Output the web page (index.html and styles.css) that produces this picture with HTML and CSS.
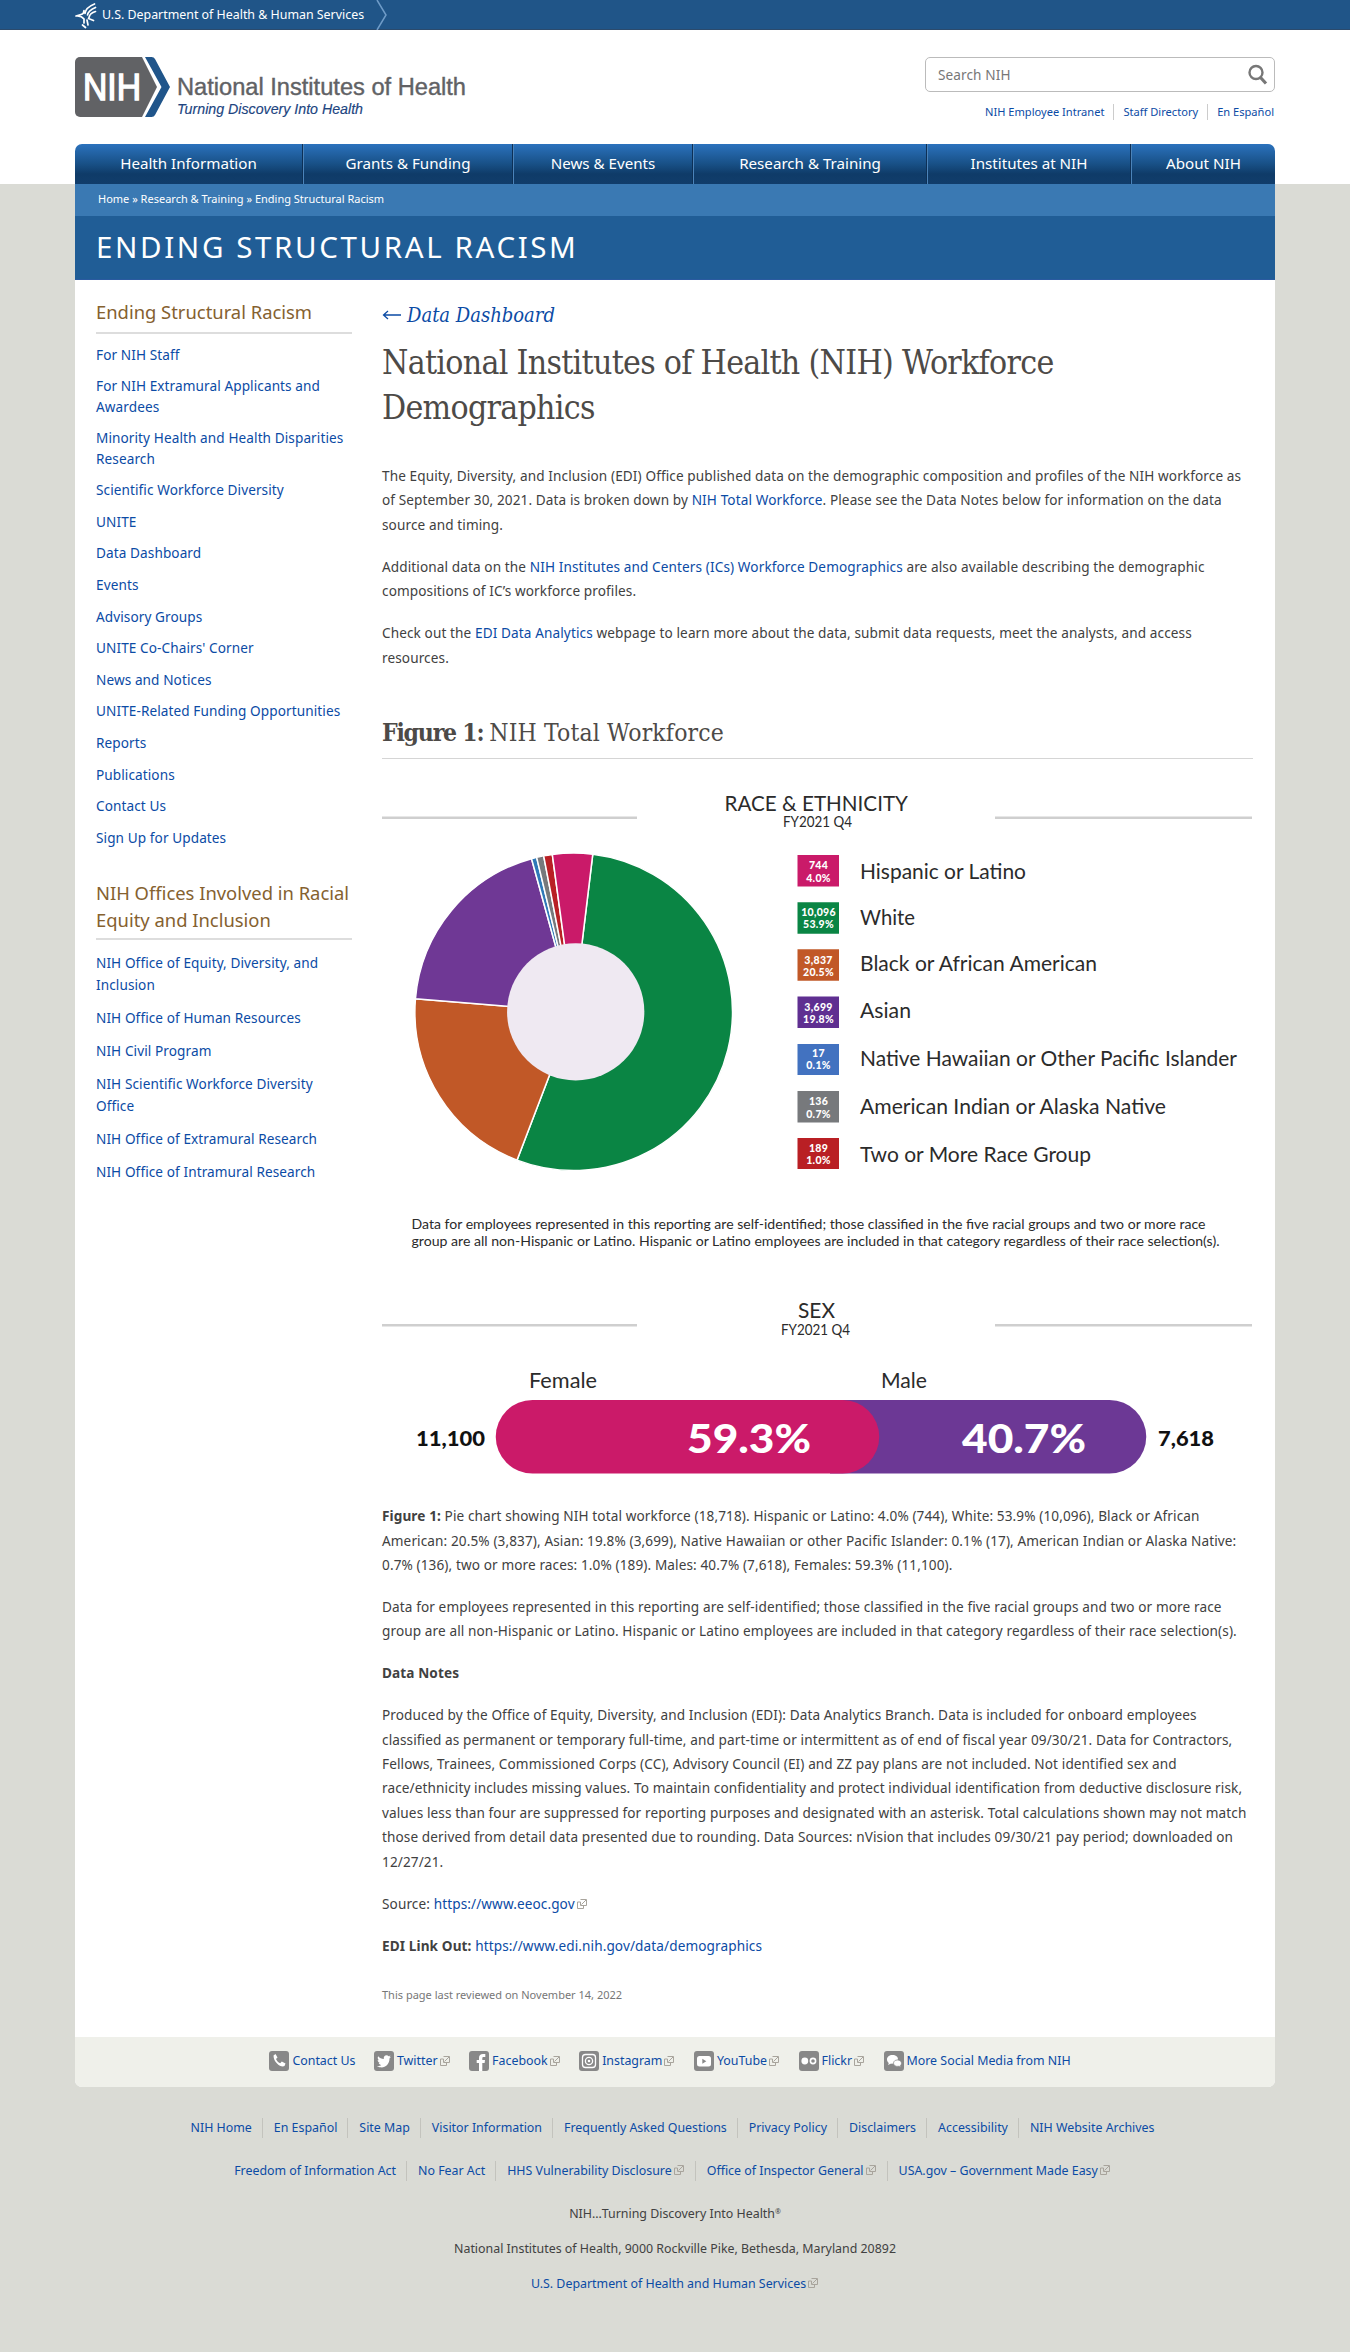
FILE: index.html
```html
<!DOCTYPE html>
<html lang="en">
<head>
<meta charset="utf-8">
<title>NIH Workforce Demographics</title>
<link rel="stylesheet" href="styles.css">
</head>
<body>
<svg class="defs" width="0" height="0" aria-hidden="true">
  <symbol id="ext" viewBox="0 0 12 12"><path d="M4.5 1.5h6v6h-2.500M10 2L5.500 6.500M4.500 4h-3v6.500h6V8M4.500 4v3.500h3.500" fill="none" stroke="currentColor"/></symbol>
</svg>
<div class="topbar"><div class="wrap topbar-in">
  <svg class="hhs" width="24" height="28" viewBox="0 0 24 28" fill="none" stroke="#fff" stroke-width="1.700" stroke-linecap="round"><path d="M19.500 3c-5 2-9 5-9.500 9.500M20.500 6.500c-4.500 2-7.500 4-8 7.500M20.500 10.500c-3.500 1-6 3-6.500 6M1 15l5-1.500c2-.5 3-2 3-4M2.500 15c4 0 5 1 6.500 3M13.500 17.500l5 2M9 18v4M7.500 24l3 2.500M12 19l1 5"/></svg>
  <span class="hhs-name">U.S. Department of Health &amp; Human Services</span>
  <svg width="12" height="30" viewBox="0 0 12 30"><path d="M1 0l9 15-9 15" fill="none" stroke="#6f9cc8" stroke-width="1.500"/></svg>
</div></div>
<header class="header"><div class="wrap header-in">
  <svg class="logo" width="400" height="62" viewBox="75 56 400 62">
    <path d="M80 57h62l15 30-15 30H80a5 5 0 0 1-5-5V62a5 5 0 0 1 5-5z" fill="#616265"/>
    <path d="M145 57h6.500q2.500 0 3.500 2l15 28-15 28q-1 2-3.500 2H145l16.500-30z" fill="#20558a"/>
    <text x="83" y="100" font-size="37" fill="#fff" stroke="#fff" stroke-width="1.400" textLength="58" lengthAdjust="spacingAndGlyphs">NIH</text>
    <text x="177" y="95" font-size="23" fill="#616265" stroke="#616265" stroke-width=".4" textLength="289" lengthAdjust="spacingAndGlyphs">National Institutes of Health</text>
    <text x="177" y="113.500" font-size="14" font-style="italic" fill="#20447f" stroke="#20447f" stroke-width=".15" textLength="186" lengthAdjust="spacingAndGlyphs">Turning Discovery Into Health</text>
  </svg>
  <div class="tools">
    <div class="search"><span>Search NIH</span>
      <svg width="20" height="21" viewBox="0 0 20 21" fill="none" stroke="#777"><circle cx="8" cy="8.500" r="6.500" stroke-width="2.400"/><path d="M12.500 13.500l5.500 6" stroke-width="3.200"/></svg>
    </div>
    <div class="quick"><a>NIH Employee Intranet</a><a>Staff Directory</a><a>En Español</a></div>
  </div>
</div>
<nav class="wrap nav"><a>Health Information</a><a>Grants &amp; Funding</a><a>News &amp; Events</a><a>Research &amp; Training</a><a>Institutes at NIH</a><a>About NIH</a></nav>
</header>
<div class="wrap page">
  <div class="crumbs">Home » Research &amp; Training » Ending Structural Racism</div>
  <div class="banner">ENDING STRUCTURAL RACISM</div>
  <div class="cols">
    <aside class="side">
      <h2>Ending Structural Racism</h2>
      <ul>
        <li>For NIH Staff</li><li>For NIH Extramural Applicants and Awardees</li><li>Minority Health and Health Disparities Research</li><li>Scientific Workforce Diversity</li><li>UNITE</li><li>Data Dashboard</li><li>Events</li><li>Advisory Groups</li><li>UNITE Co-Chairs' Corner</li><li>News and Notices</li><li>UNITE-Related Funding Opportunities</li><li>Reports</li><li>Publications</li><li>Contact Us</li><li>Sign Up for Updates</li>
      </ul>
      <h2 class="offices">NIH Offices Involved in Racial Equity and Inclusion</h2>
      <ul class="offices-list">
        <li>NIH Office of Equity, Diversity, and Inclusion</li><li>NIH Office of Human Resources</li><li>NIH Civil Program</li><li>NIH Scientific Workforce Diversity<br>Office</li><li>NIH Office of Extramural Research</li><li>NIH Office of Intramural Research</li>
      </ul>
    </aside>
    <main class="main">
      <div class="back"><svg width="20" height="10" viewBox="0 0 20 10" fill="none" stroke="#0b4ba5" stroke-width="1.300"><path d="M19 5H2M6 1L1.500 5 6 9"/></svg><a>Data Dashboard</a></div>
      <h1>National Institutes of Health (NIH) Workforce<br>Demographics</h1>
      <p>The Equity, Diversity, and Inclusion (EDI) Office published data on the demographic composition and profiles of the NIH workforce as<br>of September 30, 2021. Data is broken down by <a>NIH Total Workforce</a>. Please see the Data Notes below for information on the data<br>source and timing.</p>
      <p>Additional data on the <a>NIH Institutes and Centers (ICs) Workforce Demographics</a> are also available describing the demographic<br>compositions of IC’s workforce profiles.</p>
      <p>Check out the <a>EDI Data Analytics</a> webpage to learn more about the data, submit data requests, meet the analysts, and access<br>resources.</p>
      <h2 class="fig-title"><b>Figure 1:</b> <span>NIH Total Workforce</span></h2>
      <svg class="chart" width="871" height="726" viewBox="382 765 871 726">
        <g fill="#cfcfcf"><path d="M382 816.500h255v2.500H382zM995 816.500h257v2.500H995zM382 1324h255v2.500H382zM995 1324h257v2.500H995z"/></g>
        <g fill="#2b2b2b">
          <text x="724.500" y="810.500" font-size="21" textLength="183.500" lengthAdjust="spacingAndGlyphs">RACE &amp; ETHNICITY</text>
          <text x="783" y="827" font-size="14.500" textLength="69" lengthAdjust="spacingAndGlyphs">FY2021 Q4</text>
        </g>
        <g stroke="#fff" stroke-width="1.500" id="pie" transform="translate(573.700 1011.800) scale(1.005)">
          <path fill="#0a8544" d="M0 0L18.980-156.860A158 158 0 1 1-56.360 147.600z"/>
          <path fill="#c15827" d="M0 0L-56.360 147.600A158 158 0 0 1-157.470-12.950z"/>
          <path fill="#6f3895" d="M0 0L-157.470-12.950A158 158 0 0 1-41.960-152.330z"/>
          <path fill="#2f79b8" d="M0 0L-41.960-152.330A158 158 0 0 1-36.880-153.640z"/>
          <path fill="#77797c" d="M0 0L-36.880-153.640A158 158 0 0 1-29.880-155.150z"/>
          <path fill="#b92025" d="M0 0L-29.880-155.150A158 158 0 0 1-21.300-156.560z"/>
          <path fill="#ca1a69" d="M0 0L-21.300-156.560A158 158 0 0 1 18.980-156.860z"/>
          <circle cx="2" r="68.300" fill="#efe9f2" stroke="none"/>
        </g>
        <g>
          <path fill="#ca1a69" d="M797.500 855h41.500v31.500h-41.500z"/><path fill="#0a8544" d="M797.500 902.300h41.500v31.500h-41.500z"/><path fill="#c15827" d="M797.500 949.300h41.500v31.500h-41.500z"/><path fill="#5f2f91" d="M797.500 996.500h41.500v31.500h-41.500z"/><path fill="#4272c0" d="M797.500 1044h41.500v31h-41.500z"/><path fill="#77797c" d="M797.500 1091h41.500v31.500h-41.500z"/><path fill="#b91f24" d="M797.500 1138h41.500v31h-41.500z"/>
        </g>
        <g class="swatch-text">
          <text x="818.500" y="869">744</text><text x="818.500" y="881.500">4.0%</text>
          <text x="818.500" y="915.500">10,096</text><text x="818.500" y="928">53.9%</text>
          <text x="818.500" y="963.500">3,837</text><text x="818.500" y="976">20.5%</text>
          <text x="818.500" y="1010.500">3,699</text><text x="818.500" y="1023">19.8%</text>
          <text x="818.500" y="1057">17</text><text x="818.500" y="1069">0.1%</text>
          <text x="818.500" y="1105">136</text><text x="818.500" y="1117.500">0.7%</text>
          <text x="818.500" y="1151.500">189</text><text x="818.500" y="1164">1.0%</text>
        </g>
        <g fill="#2b2b2b" font-size="21">
          <text x="860" y="878.500" textLength="166" lengthAdjust="spacingAndGlyphs">Hispanic or Latino</text>
          <text x="860" y="925" textLength="55" lengthAdjust="spacingAndGlyphs">White</text>
          <text x="860" y="971" textLength="237" lengthAdjust="spacingAndGlyphs">Black or African American</text>
          <text x="860" y="1017.500" textLength="51" lengthAdjust="spacingAndGlyphs">Asian</text>
          <text x="860" y="1066" textLength="377" lengthAdjust="spacingAndGlyphs">Native Hawaiian or Other Pacific Islander</text>
          <text x="860" y="1114" textLength="306" lengthAdjust="spacingAndGlyphs">American Indian or Alaska Native</text>
          <text x="860" y="1162" textLength="231" lengthAdjust="spacingAndGlyphs">Two or More Race Group</text>
        </g>
        <g fill="#2b2b2b" font-size="14">
          <text x="411.500" y="1229" textLength="794" lengthAdjust="spacingAndGlyphs">Data for employees represented in this reporting are self-identified; those classified in the five racial groups and two or more race</text>
          <text x="411.500" y="1246" textLength="808" lengthAdjust="spacingAndGlyphs">group are all non-Hispanic or Latino. Hispanic or Latino employees are included in that category regardless of their race selection(s).</text>
        </g>
        <g fill="#2b2b2b">
          <text x="798" y="1318" font-size="21" textLength="37" lengthAdjust="spacingAndGlyphs">SEX</text>
          <text x="781" y="1335" font-size="14.500" textLength="69" lengthAdjust="spacingAndGlyphs">FY2021 Q4</text>
          <text x="529" y="1388" font-size="21" textLength="68" lengthAdjust="spacingAndGlyphs">Female</text>
          <text x="881" y="1388" font-size="21" textLength="46" lengthAdjust="spacingAndGlyphs">Male</text>
        </g>
        <path fill="#6c3895" d="M830 1400h279.500a36.750 36.750 0 0 1 0 73.500H830z"/>
        <path fill="#cb1a69" d="M532.500 1400h310a36.750 36.750 0 0 1 0 73.500h-310a36.750 36.750 0 0 1 0-73.500z"/>
        <g font-weight="900" font-size="40" fill="#fff">
          <text x="687" y="1452.500" textLength="124" lengthAdjust="spacingAndGlyphs">59.3%</text>
          <text x="962" y="1452.500" textLength="124" lengthAdjust="spacingAndGlyphs">40.7%</text>
        </g>
        <g font-weight="900" font-size="20" fill="#111">
          <text x="416" y="1446" textLength="69" lengthAdjust="spacingAndGlyphs">11,100</text>
          <text x="1158" y="1446" textLength="56" lengthAdjust="spacingAndGlyphs">7,618</text>
        </g>
      </svg>
      <p class="caption"><b>Figure 1:</b> Pie chart showing NIH total workforce (18,718). Hispanic or Latino: 4.0% (744), White: 53.9% (10,096), Black or African<br>American: 20.5% (3,837), Asian: 19.8% (3,699), Native Hawaiian or other Pacific Islander: 0.1% (17), American Indian or Alaska Native:<br>0.7% (136), two or more races: 1.0% (189). Males: 40.7% (7,618), Females: 59.3% (11,100).</p>
      <p>Data for employees represented in this reporting are self-identified; those classified in the five racial groups and two or more race<br>group are all non-Hispanic or Latino. Hispanic or Latino employees are included in that category regardless of their race selection(s).</p>
      <p><b>Data Notes</b></p>
      <p>Produced by the Office of Equity, Diversity, and Inclusion (EDI): Data Analytics Branch. Data is included for onboard employees<br>classified as permanent or temporary full-time, and part-time or intermittent as of end of fiscal year 09/30/21. Data for Contractors,<br>Fellows, Trainees, Commissioned Corps (CC), Advisory Council (EI) and ZZ pay plans are not included. Not identified sex and<br>race/ethnicity includes missing values. To maintain confidentiality and protect individual identification from deductive disclosure risk,<br>values less than four are suppressed for reporting purposes and designated with an asterisk. Total calculations shown may not match<br>those derived from detail data presented due to rounding. Data Sources: nVision that includes 09/30/21 pay period; downloaded on<br>12/27/21.</p>
      <p>Source: <a>https://www.eeoc.gov</a><svg class="ext"><use href="#ext"/></svg></p>
      <p><b>EDI Link Out:</b> <a>https://www.edi.nih.gov/data/demographics</a></p>
      <div class="reviewed">This page last reviewed on November 14, 2022</div>
    </main>
  </div>
  <div class="social">
    <a><svg class="ico" viewBox="0 0 20 20"><rect width="20" height="20" rx="3" fill="#888"/><path d="M4.500 4.500l2-1.500 2 3.500-1.500 1.500c.8 2 2 3.200 4.200 4.200l1.600-1.700 3.700 2-1 2.500c-3 2-11-3-11-10.500z" fill="#fff"/></svg>Contact Us</a>
    <a><svg class="ico" viewBox="0 0 20 20"><rect width="20" height="20" rx="3" fill="#888"/><path d="M3 15c2 .2 3.200-.3 4.300-1.100-1.400-.2-2.200-.9-2.600-2h1.200c-1.400-.6-2.200-1.500-2.200-3l1.200.3C3.600 8 3.400 6.500 4.200 5.200c1.500 1.700 3.300 2.700 5.600 2.900C9.400 5.600 10.800 4.300 12.500 4.300c.9 0 1.600.3 2.100.9l1.900-.7-1.200 1.700L17 5.800l-1.500 1.600C15.700 13 11 17 6.500 16.300 5 16.200 4 15.700 3 15z" fill="#fff"/></svg>Twitter<svg class="ext"><use href="#ext"/></svg></a>
    <a><svg class="ico" viewBox="0 0 20 20"><rect width="20" height="20" rx="3" fill="#888"/><path d="M10 20v-8H7.700V9H10V7c0-2.600 1.400-4 4-4h2.300v3h-1.600c-1 0-1.400.4-1.400 1.400V9H16l-.4 3h-2.300v8z" fill="#fff"/></svg>Facebook<svg class="ext"><use href="#ext"/></svg></a>
    <a><svg class="ico" viewBox="0 0 20 20"><rect width="20" height="20" rx="3" fill="#888"/><g fill="none" stroke="#fff" stroke-width="1.300"><rect x="3.500" y="3.500" width="13" height="13" rx="3"/><circle cx="10" cy="10" r="3.600"/></g><circle cx="10" cy="10" r="1.300" fill="#fff"/></svg>Instagram<svg class="ext"><use href="#ext"/></svg></a>
    <a><svg class="ico" viewBox="0 0 20 20"><rect width="20" height="20" rx="3" fill="#888"/><rect x="3" y="5" width="14" height="10.500" rx="2.500" fill="#fff"/><path d="M8.300 7.800v5l4-2.500z" fill="#888"/></svg>YouTube<svg class="ext"><use href="#ext"/></svg></a>
    <a><svg class="ico" viewBox="0 0 20 20"><rect width="20" height="20" rx="3" fill="#888"/><circle cx="5.800" cy="10" r="3.400" fill="#fff"/><circle cx="14" cy="10" r="2.600" fill="none" stroke="#fff" stroke-width="1.600"/></svg>Flickr<svg class="ext"><use href="#ext"/></svg></a>
    <a><svg class="ico" viewBox="0 0 20 20"><rect width="20" height="20" rx="3" fill="#888"/><path d="M8.500 4c3.300 0 5.500 1.800 5.500 4.300l-4 4.200-3.500.2L4 14l.8-2C3.500 11 3 9.800 3 8.500 3 6 5.200 4 8.500 4z" fill="#fff"/><path d="M13.500 9c2.300 0 4 1.300 4 3.200 0 1-.4 1.800-1.200 2.400l.6 1.700-2-1c-3.200.5-5.400-1-5.400-3.100S11.200 9 13.500 9z" fill="#fff" stroke="#888" stroke-width=".7"/></svg>More Social Media from NIH</a>
  </div>
</div>
<footer class="footer">
  <div class="flinks row1"><a>NIH Home</a><a>En Español</a><a>Site Map</a><a>Visitor Information</a><a>Frequently Asked Questions</a><a>Privacy Policy</a><a>Disclaimers</a><a>Accessibility</a><a>NIH Website Archives</a></div>
  <div class="flinks"><a>Freedom of Information Act</a><a>No Fear Act</a><a>HHS Vulnerability Disclosure<svg class="ext"><use href="#ext"/></svg></a><a>Office of Inspector General<svg class="ext"><use href="#ext"/></svg></a><a>USA.gov – Government Made Easy<svg class="ext"><use href="#ext"/></svg></a></div>
  <div class="fline">NIH…Turning Discovery Into Health<sup>®</sup></div>
  <div class="fline">National Institutes of Health, 9000 Rockville Pike, Bethesda, Maryland 20892</div>
  <div class="fline"><a>U.S. Department of Health and Human Services<svg class="ext"><use href="#ext"/></svg></a></div>
</footer>
</body>
</html>
```
FILE: styles.css
```css
* { box-sizing: border-box; }
body { margin: 0; background: #dadbd5; color: #414141; font: 13.6px/1.8 "Noto Sans", sans-serif; height: 2352px; }
a, .side li { color: #0b4ba5; text-decoration: none; }
.defs { display: block; height: 0; }
.wrap { width: 1200px; margin: 0 auto; }
.topbar { background: #205588; height: 30px; border-bottom: 1px solid #2b4a6c; }
.topbar-in { display: flex; align-items: center; height: 30px; color: #fff; }
.hhs { margin-right: 3px; }
.hhs-name { font-size: 12.4px; margin-right: 12px; padding-top: 1px; white-space: nowrap; }
.header { background: #fff; height: 154px; }
.header-in { height: 114px; display: flex; justify-content: space-between; padding-top: 26px; }
.logo { font-family: "Liberation Sans", Arial, sans-serif; }
.tools { width: 350px; padding-top: 1px; }
.search { height: 35px; border: 1px solid #bbb; border-radius: 5px; display: flex; align-items: center; justify-content: space-between; padding: 0 6px 0 12px; color: #777; font-size: 13.6px; letter-spacing: .1px; }
.search span { padding-top: 1px; }
.quick { display: flex; justify-content: flex-end; margin-top: 12px; padding-right: 1px; font-size: 11.1px; line-height: 16px; white-space: nowrap; }
.quick a + a { border-left: 1px solid #ccc; margin-left: 9px; padding-left: 9px; }
.nav { height: 40px; display: grid; grid-template-columns: 228px 210px 180px 234px 204px 144px; background: linear-gradient(#2b72bd, #185086 50%, #0f3b68 75%, #113d6b); border-radius: 7px 7px 0 0; overflow: hidden; }
.nav a { color: #fff; font-size: 15.15px; line-height: 39px; text-align: center; white-space: nowrap; border-right: 1px solid #0d3056; border-left: 1px solid #4b83b9; }
.nav a:first-child { border-left: 0; }
.nav a:last-child { border-right: 0; }
.page { background: #fff; border-radius: 0 0 7px 7px; overflow: hidden; height: 1903px; display: flex; flex-direction: column; }
.crumbs { background: #3a79b3; height: 32px; line-height: 29px; color: #fff; font-size: 11px; padding-left: 23px; }
.banner { background: #205d96; height: 64px; line-height: 62px; padding-left: 21px; color: #fff; font-size: 29.5px; letter-spacing: 2.62px; border-bottom: 1.500px solid #2a5aa0; }
.cols { display: grid; grid-template-columns: 256px 871px; column-gap: 30px; padding-left: 21px; height: 1757px; }
.side { padding-top: 18px; letter-spacing: .09px; }
.side h2 { margin: 0; color: #85612f; font-weight: 400; font-size: 18.4px; letter-spacing: 0; line-height: 27px; padding-bottom: 7px; border-bottom: 2px solid #ddd; white-space: nowrap; }
.side ul { list-style: none; margin: 5px 0 0; padding: 0; }
.side li { line-height: 20.4px; padding: 5.600px 0; }
.side h2.offices { margin-top: 25px; padding-bottom: 5px; white-space: normal; }
.side ul.offices-list { margin-top: 7px; }
.side .offices-list li { line-height: 21.8px; }
.main { padding-top: 20px; white-space: nowrap; }
.back { height: 30px; display: flex; align-items: center; gap: 5px; font: italic 20px/30px "DejaVu Serif Condensed", "DejaVu Serif", serif; letter-spacing: 0; }
h1 { margin: 10px 0 34px; font: 400 33.5px/45px "DejaVu Serif Condensed", "DejaVu Serif", serif; letter-spacing: -.7px; color: #4d4a47; }
.main p { margin: 0 0 17.4px; letter-spacing: .105px; }
.fig-title { margin: 45px 0 6px; height: 44px; border-bottom: 1px solid #d5d5d5; font: 400 24.5px/36px "DejaVu Serif Condensed", "DejaVu Serif", serif; letter-spacing: -1.2px; color: #4d4a47; }
.fig-title span { letter-spacing: .15px; }
.chart { display: block; font-family: Lato, sans-serif; }
.swatch-text { font-size: 10.5px; font-weight: 900; fill: #fff; text-anchor: middle; letter-spacing: .3px; }
.main p.caption { margin-top: 13px; }
.reviewed { font-size: 11px; color: #777; line-height: 20px; margin-top: 27px; }
.ext { width: 12px; height: 12px; vertical-align: -1px; margin-left: 1px; color: #a8a49c; }
.social { background: #eff0ea; height: 50px; display: flex; justify-content: center; align-items: center; gap: 18.5px; font-size: 12.4px; padding: 0 10px 1px 0; }
.social a { display: flex; align-items: center; white-space: nowrap; }
.ico { width: 20px; height: 20px; margin-right: 3px; }
.footer { font-size: 12.4px; text-align: center; white-space: nowrap; padding-top: 31px; }
.flinks { display: flex; justify-content: center; height: 20px; line-height: 20px; margin-bottom: 23px; padding-right: 5px; }
.flinks a + a { border-left: 1px solid #c3c3bd; margin-left: 10px; padding-left: 11px; }
.fline { line-height: 20px; height: 20px; margin-bottom: 15px; }
sup { font-size: 7px; line-height: 0; vertical-align: 4px; }
```
